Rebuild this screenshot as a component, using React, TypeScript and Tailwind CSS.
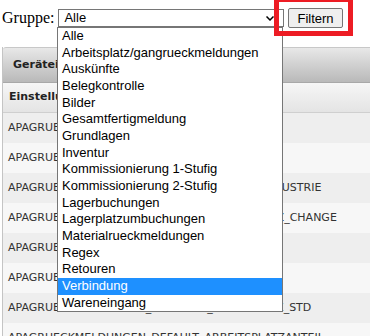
const groups = [
  'Alle',
  'Arbeitsplatz/gangrueckmeldungen',
  'Auskünfte',
  'Belegkontrolle',
  'Bilder',
  'Gesamtfertigmeldung',
  'Grundlagen',
  'Inventur',
  'Kommissionierung 1-Stufig',
  'Kommissionierung 2-Stufig',
  'Lagerbuchungen',
  'Lagerplatzumbuchungen',
  'Materialrueckmeldungen',
  'Regex',
  'Retouren',
  'Verbindung',
  'Wareneingang',
]

const settings = [
  'APAGRUECKMELDUNGEN_AKTIV',
  'APAGRUECKMELDUNGEN_BUCHEN',
  'APAGRUECKMELDUNGEN_BUCHUNGSMODUS_INDUSTRIE',
  'APAGRUECKMELDUNGEN_ALLOW_ARBEITSPLAETZ_CHANGE',
  'APAGRUECKMELDUNGEN_DRUCKEN',
  'APAGRUECKMELDUNGEN_MENGE',
  'APAGRUECKMELDUNGEN_MANDANT_LAGERPLATZ_STD',
  'APAGRUECKMELDUNGEN_DEFAULT_ARBEITSPLATZANTEIL',
]

export default function App() {
  return (
    <div className="relative w-[370px] h-[336px] overflow-hidden bg-white">
      {/* filter bar */}
      <div className="flex items-center gap-[4px] h-[36px] pl-[2px]">
        <span className="font-['Liberation_Serif',serif] text-[16px] text-black">Gruppe:</span>
        <div className="flex items-center justify-between w-[226px] h-[18px] border border-[#767676] bg-white pl-[5px] pr-[9px] font-['Liberation_Sans',Arial,sans-serif] text-[13px] text-black">
          <span>Alle</span>
          <svg width="8" height="5" viewBox="0 0 8 5">
            <polyline points="0.5,0.5 4,4 7.5,0.5" fill="none" stroke="#000" strokeWidth="1.5" />
          </svg>
        </div>
        <button className="h-[20px] px-[8px] border border-[#767676] rounded-[2px] bg-[#efefef] font-['Liberation_Sans',Arial,sans-serif] text-[13px] text-black leading-none">
          Filtern
        </button>
      </div>

      {/* settings table */}
      <div className="ml-[2px] mt-[11px] w-[420px] border-l border-[#c4c4c4] font-['DejaVu_Sans',Verdana,sans-serif]">
        <div className="flex items-center h-[36px] pl-[10px] border-t border-b border-t-[#c8c8c8] border-b-[#a8a8a8] rounded-tl-[3px] bg-gradient-to-b from-[#e8e8e8] to-[#b9b9b9] text-[11px] font-bold text-[#222]">
          Geräteinformationen
        </div>
        <div className="flex items-center h-[30px] pl-[6px] border-b border-[#cfcfcf] bg-gradient-to-b from-[#f6f6f6] to-[#e4e4e4] text-[11px] font-bold text-[#222]">
          Einstellung
        </div>
        {settings.map((s, i) => (
          <div
            key={s}
            className={
              i % 2 === 0
                ? 'flex items-center h-[30px] pl-[5px] bg-[#eeeeee] text-[11px] text-[#333]'
                : 'flex items-center h-[30px] pl-[5px] bg-[#f7f7f7] text-[11px] text-[#333]'
            }
          >
            {s}
          </div>
        ))}
      </div>

      {/* open select list */}
      <ul className="absolute left-[57px] top-[27px] w-[226px] border border-[#767676] bg-white font-['Liberation_Sans',Arial,sans-serif] text-[13px]">
        {groups.map((g) => (
          <li
            key={g}
            className={
              g === 'Verbindung'
                ? 'h-[16.67px] leading-[16.67px] pl-[4px] bg-[#1e90ff] text-white whitespace-nowrap'
                : 'h-[16.67px] leading-[16.67px] pl-[4px] text-black whitespace-nowrap'
            }
          >
            {g}
          </li>
        ))}
      </ul>

      {/* annotation */}
      <div className="absolute left-[274px] top-[-3px] w-[79px] h-[39px] border-[5px] border-[#ed1c24]" />
    </div>
  )
}
